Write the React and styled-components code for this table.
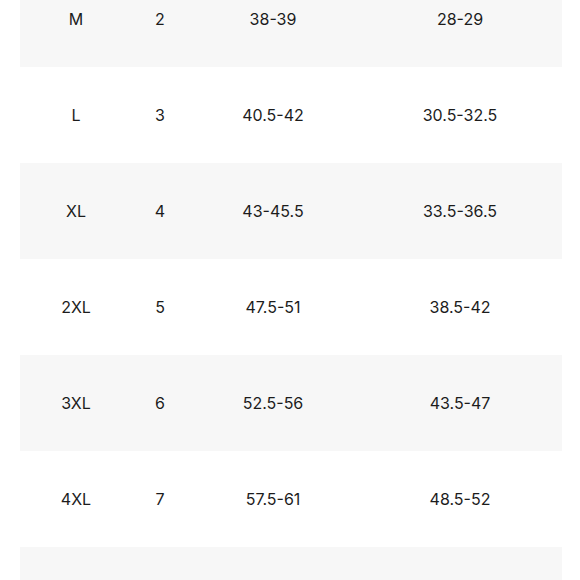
import React from "react";
import styled, { createGlobalStyle } from "styled-components";

const GlobalStyle = createGlobalStyle`
  html, body {
    margin: 0;
    padding: 0;
    background: #ffffff;
    overflow: hidden;
  }
`;

const Table = styled.div`
  margin: -29px 18px 0 20px;
  width: 542px;
  font-family: Inter, "Liberation Sans", sans-serif;
  font-size: 16px;
  color: #1c1c1c;
`;

const Row = styled.div`
  display: grid;
  grid-template-columns: 112px 56px 170px 204px;
  align-items: center;
  height: 96px;
  background: ${({ $shaded }) => ($shaded ? "#f7f7f7" : "#ffffff")};
`;

const Cell = styled.div`
  text-align: center;
`;

// last row only peeks into view, its values sit below the fold
const sizes = [
  ["M", "2", "38-39", "28-29"],
  ["L", "3", "40.5-42", "30.5-32.5"],
  ["XL", "4", "43-45.5", "33.5-36.5"],
  ["2XL", "5", "47.5-51", "38.5-42"],
  ["3XL", "6", "52.5-56", "43.5-47"],
  ["4XL", "7", "57.5-61", "48.5-52"],
  ["", "", "", ""],
];

const App = () => {
  return (
    <>
      <GlobalStyle />
      <Table>
        {sizes.map((row, i) => (
          <Row key={i} $shaded={i % 2 === 0}>
            {row.map((value, j) => (
              <Cell key={j}>{value}</Cell>
            ))}
          </Row>
        ))}
      </Table>
    </>
  );
};

export default App;
